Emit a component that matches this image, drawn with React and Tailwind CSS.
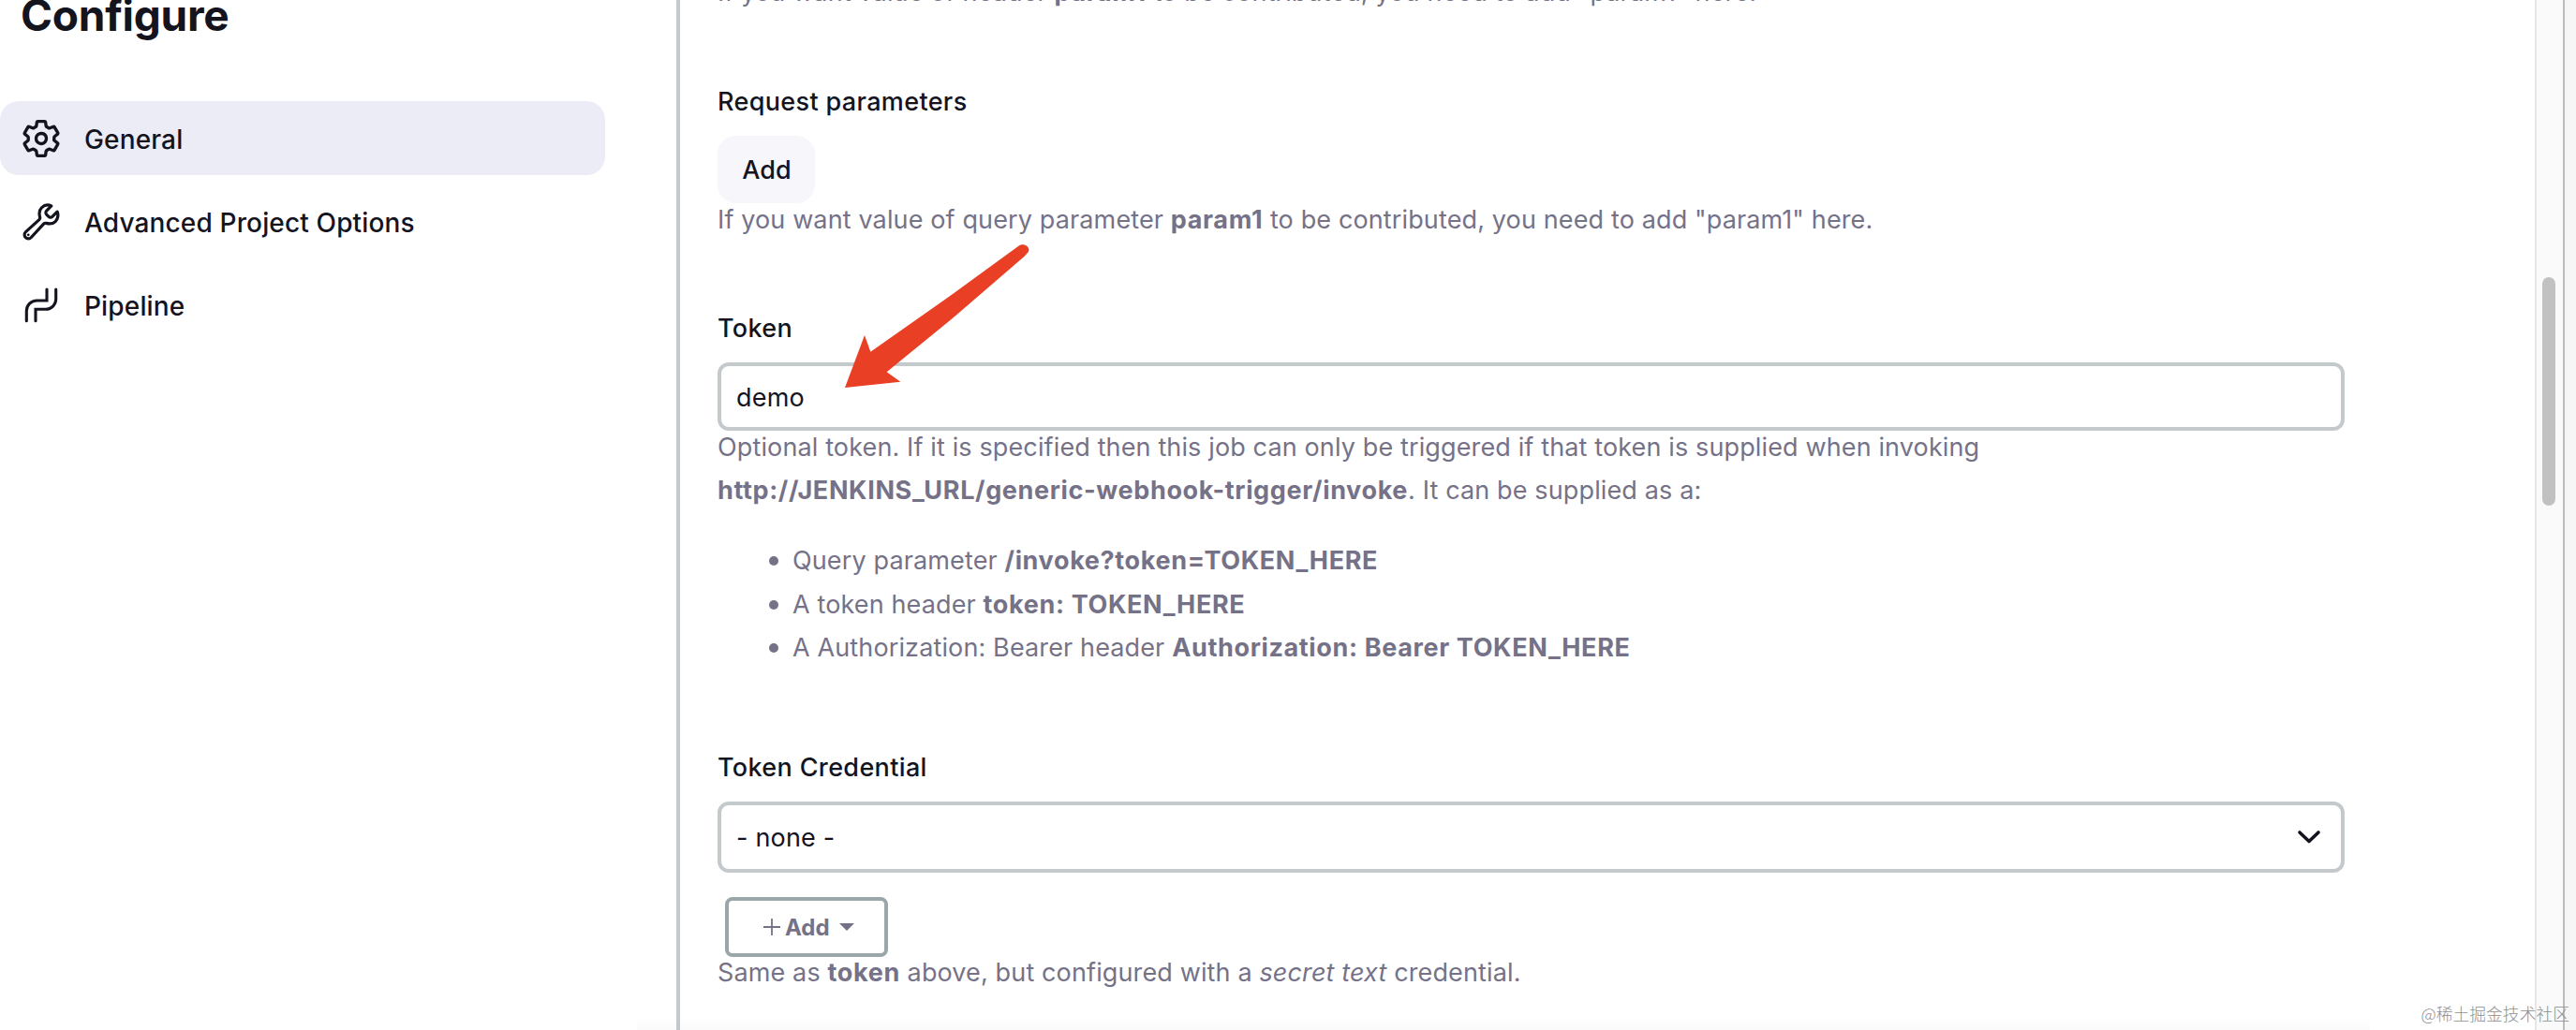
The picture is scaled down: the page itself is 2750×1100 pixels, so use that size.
import React from "react";
import { IoSettingsOutline, IoBuildOutline } from "react-icons/io5";

const PipelineIcon = ({ className }) => (
  <svg viewBox="0 0 44 44" className={className} fill="none" stroke="currentColor" strokeWidth="3.1" strokeLinecap="round">
    <path d="M28 5V17H17.5A11 11 0 0 0 6.3 28V38.7" />
    <path d="M37.7 5V15.5A11 11 0 0 1 27 26.3H16V38.7" />
  </svg>
);

const items = [
  { label: "General", icon: IoSettingsOutline, iconClass: "[&_path]:[stroke-width:39px]", active: true },
  { label: "Advanced Project Options", icon: IoBuildOutline, iconClass: "[&_path]:[stroke-width:37px]" },
  { label: "Pipeline", icon: PipelineIcon, iconClass: "" },
];

const Sidebar = () => (
  <aside className="w-[722px] shrink-0">
    <h1 className="-mt-[15px] ml-[22px] h-[60px] text-[46px] leading-[63px] font-bold tracking-[-0.25px]">Configure</h1>
    <nav className="mt-[63px] flex w-[646px] flex-col gap-[10px]">
      {items.map(({ label, icon: Icon, iconClass, active }) => (
        <a
          key={label}
          className={`flex h-[79px] items-center gap-6 rounded-[20px] pl-[22px] text-[28px] font-medium tracking-[0.15px] ${active ? "bg-[#ececf6]" : ""}`}
        >
          <Icon className={`h-11 w-11 ${iconClass}`} />
          <span className="pt-[2px]">{label}</span>
        </a>
      ))}
    </nav>
  </aside>
);

const Label = ({ children, className }) => (
  <div className={`h-9 pt-px text-[27px] leading-9 font-medium tracking-[0.35px] text-[#14141f] ${className}`}>{children}</div>
);

const Help = ({ children, className }) => (
  <div className={`text-[27px] leading-[46px] tracking-[0.13px] whitespace-nowrap text-[#757288] [&_b]:tracking-[0.64px] ${className}`}>
    {children}
  </div>
);

// Flecha roja que señala el campo del token
const Arrow = () => (
  <svg viewBox="0 0 720 540" className="absolute top-[250px] left-[880px] h-[180px] w-[240px]" fill="#e94025">
    <path d="M66 492 129 324 148 377 390 207 622 38C640 26 662 42 653 58L640 72 420 262 200 442 244 473Z" />
  </svg>
);

export default function App() {
  return (
    <div className="relative flex h-[1100px] w-[2750px] overflow-hidden bg-white font-['Inter',sans-serif] text-[#14141f]">
      <Sidebar />

      <main className="flex-1 border-l-4 border-[#c4cacd] pl-10">
        <div className="w-[1737px]">
          <Help className="-mt-[31px]">
            If you want value of header <b>param1</b> to be contributed, you need to add "param1" here.
          </Help>

          <Label className="mt-[75px]">Request parameters</Label>
          <button className="mt-[19px] block h-[72px] w-[104px] rounded-[20px] bg-[#f6f6fb] pt-[2px] pl-px text-[27px] font-medium">
            Add
          </button>
          <Help className="-mt-[5px]">
            If you want value of query parameter <b>param1</b> to be contributed, you need to add "param1" here.
          </Help>

          <Label className="mt-[74px]">Token</Label>
          <div className="mt-[19px] flex h-[73px] items-center rounded-[12px] border-4 border-[#c4cacc] pt-[3px] pl-4 text-[27px] tracking-[0.2px]">
            demo
          </div>
          <Help className="-mt-[5px]">
            Optional token. If it is specified then this job can only be triggered if that token is supplied when invoking
            <br />
            <b>http://JENKINS_URL/generic-webhook-trigger/invoke</b>. It can be supplied as a:
          </Help>
          <ul className="mt-[29px] flex flex-col gap-[0.5px]">
            {[
              ["Query parameter", "/invoke?token=TOKEN_HERE"],
              ["A token header", "token: TOKEN_HERE"],
              ["A Authorization: Bearer header", "Authorization: Bearer TOKEN_HERE"],
            ].map(([text, code]) => (
              <li key={text} className="flex items-center pl-[55px]">
                <span className="mr-[15px] h-[10px] w-[10px] rounded-full bg-[#757288]" />
                <Help>
                  {text} <b>{code}</b>
                </Help>
              </li>
            ))}
          </ul>

          <Label className="mt-[86px]">Token Credential</Label>
          <div className="mt-[19px] flex h-[76px] items-center justify-between rounded-[12px] border-4 border-[#c4cacc] pr-[20px] pl-4 text-[27px] tracking-[0.2px]">
            <span className="pt-[2px]">- none -</span>
            <svg viewBox="0 0 28 16" className="h-4 w-7" fill="none" stroke="#14141f" strokeWidth="3.6" strokeLinecap="round" strokeLinejoin="round">
              <path d="M4 3 14 12.5 24 3" />
            </svg>
          </div>

          <button className="mt-[26px] ml-2 flex h-16 w-[174px] items-center rounded-[8px] border-4 border-[#9ba6aa] pl-[37px] text-[24px] font-bold text-[#757288]">
            <svg viewBox="0 0 18 18" className="h-[18px] w-[18px]" stroke="currentColor" strokeWidth="1.8">
              <path d="M9 0V18M0 9H18" />
            </svg>
            <span className="ml-[5px] pt-px">Add</span>
            <svg viewBox="0 0 16 8" className="ml-[10px] h-2 w-4" fill="currentColor">
              <path d="M0 0H16L8 8Z" />
            </svg>
          </button>
          <Help className="-mt-[6px]">
            Same as <b>token</b> above, but configured with a <i>secret text</i> credential.
          </Help>
        </div>
      </main>

      {/* Barra de desplazamiento */}
      <div className="w-8 shrink-0 border-x-2 border-l-[#e6e6e6] border-r-[#bcbcbc] bg-[#fafafa] pt-[296px] pl-[6px]">
        <div className="h-[244px] w-[14px] rounded-full bg-[#c1c1c1]" />
      </div>
      <div className="w-3 shrink-0 bg-[#f6f6f6]" />

      {/* Sombra de la barra inferior */}
      <div className="absolute bottom-0 left-[680px] h-[14px] w-[1850px] bg-linear-to-b from-transparent to-black/2" />
      <Arrow />
      <div className="absolute right-[7px] bottom-[4px] font-['Noto_Sans_CJK_SC',sans-serif] text-[17.8px] leading-7 font-light text-[#8f8f8f]">
        @稀土掘金技术社区
      </div>
    </div>
  );
}
